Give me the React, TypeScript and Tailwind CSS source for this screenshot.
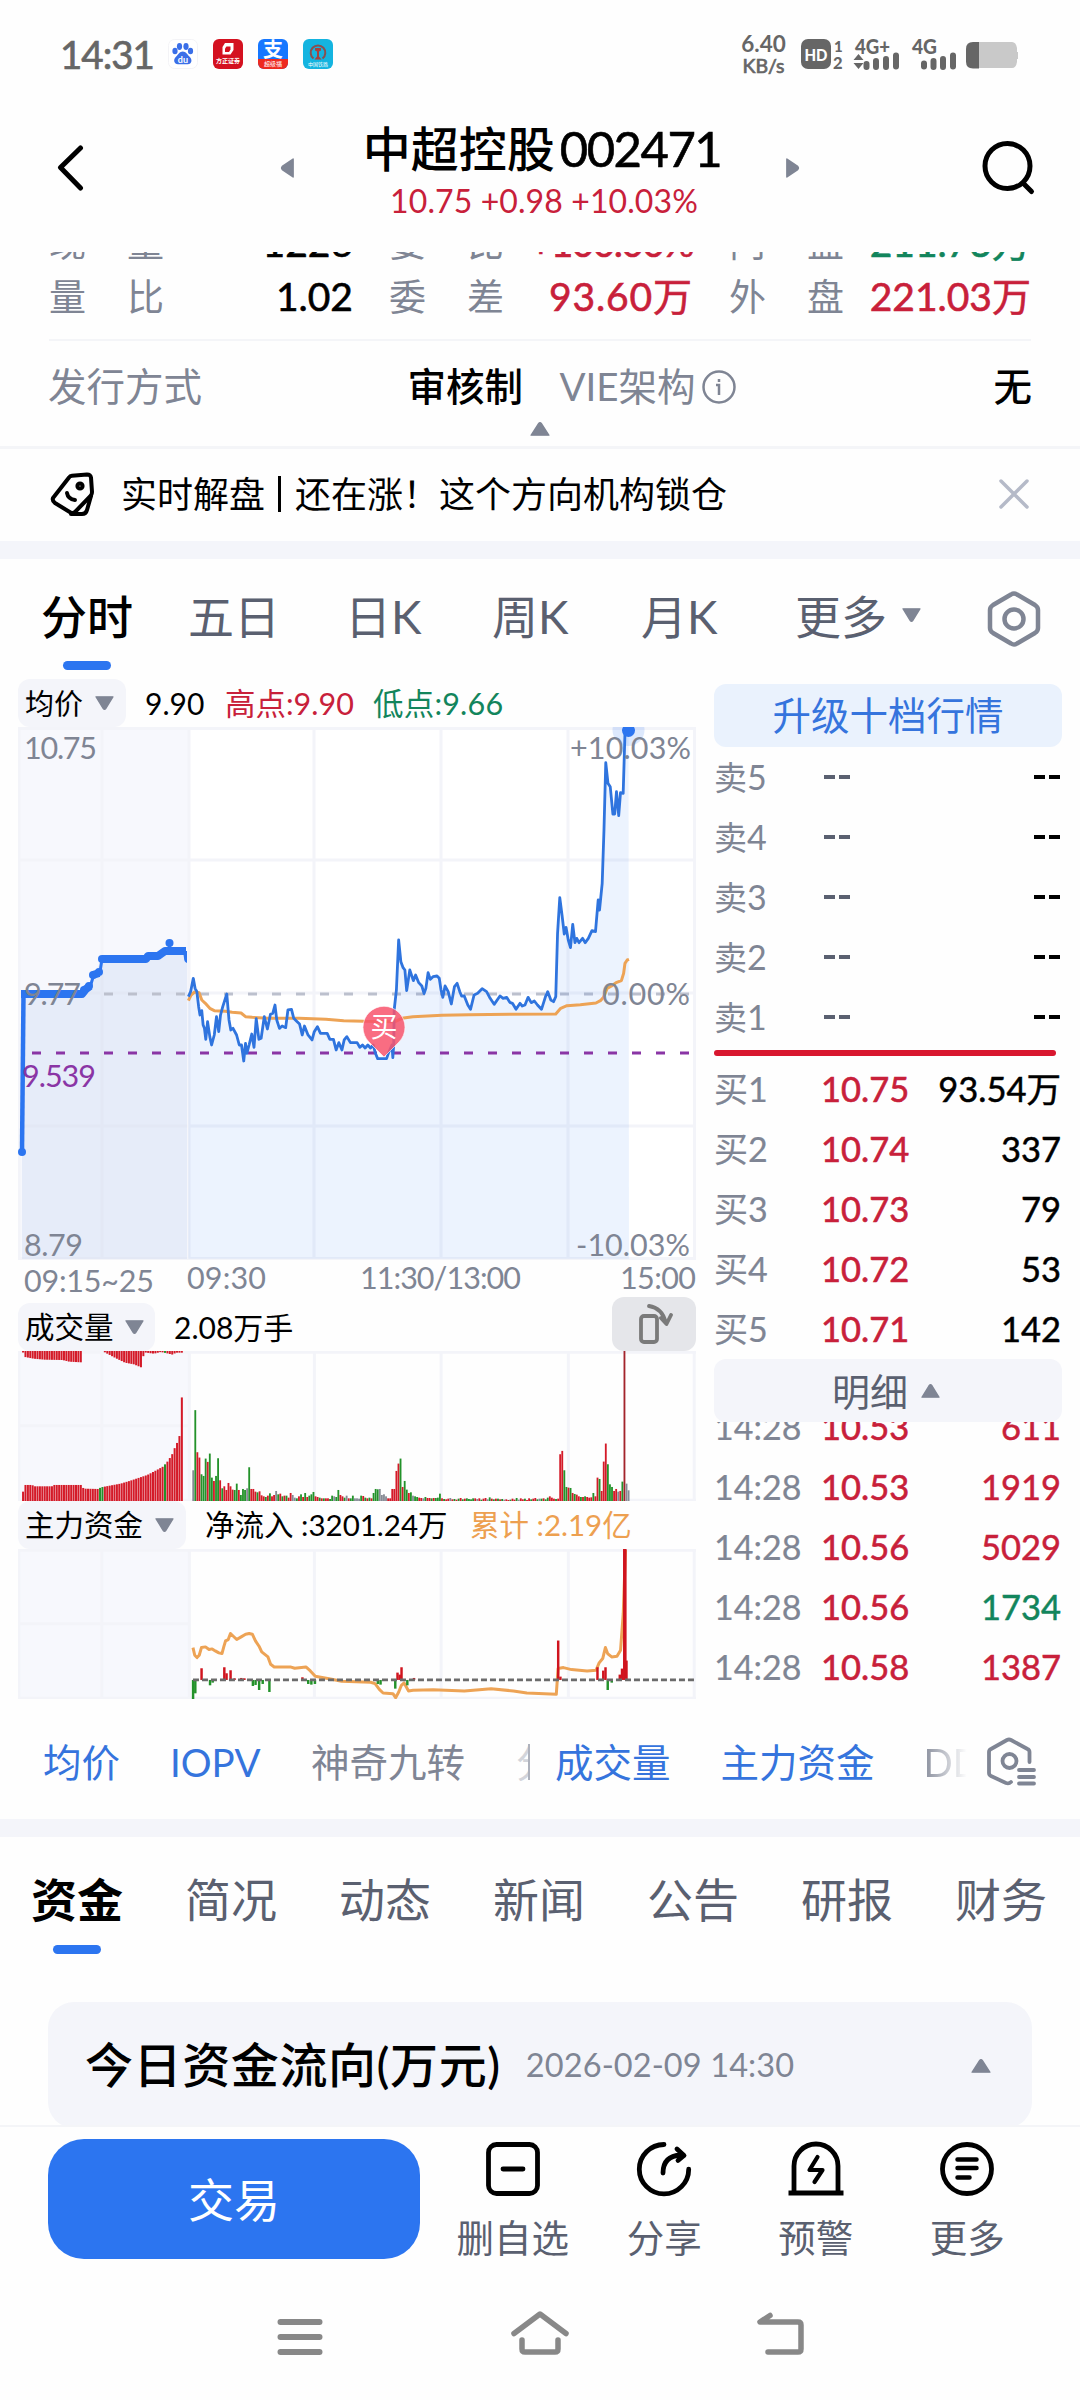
import type { ReactNode } from 'react';
import clsx from 'clsx';

/* ---------- data ---------- */

const asks = ['卖5', '卖4', '卖3', '卖2', '卖1'];

const bids = [
  { label: '买1', price: '10.75', volume: '93.54万' },
  { label: '买2', price: '10.74', volume: '337' },
  { label: '买3', price: '10.73', volume: '79' },
  { label: '买4', price: '10.72', volume: '53' },
  { label: '买5', price: '10.71', volume: '142' },
];

const ticks = [
  { price: '10.53', volume: '611', up: true },
  { price: '10.53', volume: '1919', up: true },
  { price: '10.56', volume: '5029', up: true },
  { price: '10.56', volume: '1734', up: false },
  { price: '10.58', volume: '1387', up: true },
];

const infoTabs = ['资金', '简况', '动态', '新闻', '公告', '研报', '财务'];

// Chart points are stored in chart units and scaled down by the <g> that holds them
const pricePoints =
  '422,230 427,215 433,175 437,205 441,215 445,260 448,285 452,272 455,315 458,325 461,358 465,305 470,350 474,375 480,345 485,290 490,335 494,285 499,260 508,222 513,300 517,330 522,325 530,345 536,375 541,375 546,423 550,370 553,400 558,375 564,342 569,382 574,296 580,358 585,355 592,290 599,327 606,282 611,280 616,255 620,300 626,325 632,318 640,323 645,270 653,268 658,295 664,303 671,312 677,345 682,318 690,345 699,360 704,335 711,320 718,340 727,340 733,340 739,358 747,358 753,390 759,368 766,390 771,360 777,350 785,368 800,368 806,382 812,375 818,384 824,375 830,384 836,375 841,400 846,416 866,416 870,400 878,375 880,413 882,375 883,270 888,210 893,60 898,125 903,143 907,150 911,212 918,150 926,182 931,165 938,188 945,198 950,221 954,205 959,158 964,178 970,170 979,168 984,175 988,210 992,232 997,198 1004,215 1011,252 1018,200 1024,190 1030,215 1034,228 1040,228 1048,255 1054,268 1062,225 1070,220 1080,206 1090,215 1098,235 1107,253 1120,228 1127,235 1135,232 1142,247 1148,250 1156,268 1165,250 1170,258 1176,255 1183,232 1190,248 1197,243 1204,255 1213,268 1222,230 1227,215 1234,240 1240,245 1245,230 1249,40 1254,-67 1259,-15 1264,42 1268,22 1273,60 1278,83 1283,13 1288,68 1292,55 1297,68 1305,55 1311,68 1318,55 1326,32 1334,35 1340,-60 1343,-30 1349,-110 1353,-270 1357,-472 1362,-410 1367,-400 1373,-318 1377,-318 1381,-385 1386,-313 1390,-382 1396,-380 1400,-560 1408,-570';

const averagePoints =
  '422,242 428,225 436,216 446,218 452,240 460,250 470,265 480,272 505,274 520,277 540,279 550,290 565,292 600,295 670,295 730,298 770,302 815,304 885,305 900,295 925,290 990,286 1050,284 1245,282 1256,265 1270,257 1300,254 1335,249 1345,242 1352,232 1360,205 1370,198 1380,188 1392,182 1397,160 1400,130 1405,120 1409,118';

const fundPoints =
  '432,1102 436,1125 441,1132 446,1125 451,1102 460,1100 468,1108 475,1106 482,1112 490,1118 497,1120 501,1100 505,1082 511,1078 516,1060 530,1078 540,1070 550,1062 558,1060 565,1062 572,1082 580,1098 586,1115 600,1130 606,1152 614,1160 650,1160 660,1164 685,1160 695,1172 706,1188 740,1196 765,1203 830,1206 840,1210 850,1228 858,1238 880,1240 886,1252 893,1235 899,1215 905,1208 915,1232 925,1230 970,1228 1040,1232 1100,1225 1150,1232 1180,1238 1246,1242 1250,1165 1262,1162 1280,1168 1315,1172 1335,1170 1342,1148 1350,1135 1356,1102 1361,1120 1370,1130 1382,1128 1390,1110 1396,1000 1401,810';

// [x, net inflow]
const fundBars: number[][] = [
  [432, -57], [437, -40], [451, 35], [470, -16], [476, -8], [502, 38], [507, 20], [516, 29], [525, 5], [540, 6], [547, 5],
  [566, -18], [572, -15], [580, -30], [588, -12], [603, -36], [677, 8], [690, -12], [697, -14], [705, -12], [846, -12],
  [852, -14], [885, -26], [890, 22], [895, 16], [899, 38], [912, -16], [927, 6], [1250, 118], [1255, 10], [1338, 38],
  [1351, 28], [1356, 38], [1361, -30], [1370, -8], [1388, 16], [1393, 34], [1398, 392], [1403, 58],
];

// Height plus colour letter per minute: r = up, g = down, x = flat
const minuteBars =
  '92x 272g 146r 130r 80g 75g 127g 117r 142g 70g 60r 75g 128g 62r 38g 44r 33r 54r 44r 34r 33g 52g 33r 18g 36g 33g 38x 101g 36r 36r 28r 26g 29r 17r 14r 12g 16r 23g 14r 18r 30x 20g 22r 14g 16r 16g 10r 24r 18x 10x 8g 14r 20g 12r 24g 12r 16g 20g 27g 14r 12r 10g 8r 8g 8r 8r 6g 16g 14x 12g 33g 18r 14r 10g 16x 8r 8g 16g 8x 8x 7x 16g 15r 10g 8r 10g 8r 24g 36g 35g 36x 18x 20x 14x 8r 8r 36r 36r 90r 112r 127g 42r 60g 34g 24r 26g 16x 14g 12g 10r 9r 8x 12g 9r 9r 8g 9r 9g 10g 22g 8r 6g 5r 7r 9x 5r 6g 4r 7g 9r 5g 7r 8g 6g 5g 8g 8r 6x 8r 4g 7r 9r 5x 11g 7r 5g 7r 7g 5r 6g 4x 5r 3r 4g 7r 4r 9g 4x 8r 5r 7g 3r 8r 5g 7r 9r 5g 7x 7g 8r 5g 10g 14r 10r 7r 6g 7r 140r 150r 92g 42g 40r 39g 24r 21g 19r 14r 12g 12r 14g 12r 10r 11r 24g 14r 70r 66g 30r 118r 172r 110g 50g 42g 30r 36r 28x 30r 58g 449d 52x 32x'.split(' ');

const barColors: Record<string, string> = { r: '#d41a28', g: '#23922a', x: '#858a94', d: '#a3242c' };

const between = (anchors: number[][], x: number) => {
  for (let i = 1; i < anchors.length; i++) {
    const [x0, y0] = anchors[i - 1];
    const [x1, y1] = anchors[i];
    if (x <= x1) return y0 + ((y1 - y0) * (x - x0)) / (x1 - x0);
  }
  return anchors[anchors.length - 1][1];
};

const auctionMatched = [
  [51, 28], [52, 28], [56, 48], [72, 48], [76, 44], [116, 44], [120, 48], [183, 48], [187, 37], [220, 36], [226, 41], [250, 47],
  [270, 52], [290, 60], [310, 69], [330, 78], [350, 92], [365, 103], [375, 118], [385, 138], [391, 158], [396, 172], [402, 195], [407, 310],
];
const auctionUnmatched = [
  [51, 3], [56, 18], [75, 23], [100, 26], [140, 27], [155, 32], [183, 34], [184, 0], [230, 0], [236, 5], [260, 22], [280, 35], [300, 40],
  [318, 50], [322, 4], [345, 8], [360, 3], [378, 8], [385, 11], [395, 5], [407, 5],
];
const auctionXs = Array.from({ length: 67 }, (_, i) => 51.5 + i * 5.39);

/* ---------- small pieces ---------- */

function Triangle({ dir = 'down', className }: { dir?: 'up' | 'down' | 'left' | 'right'; className: string }) {
  const d = {
    up: 'M2 19 L9 3 Q10 1 11 3 L18 19 Z',
    down: 'M2 1 L18 1 L11 17 Q10 19 9 17 Z',
    left: 'M19 1 L19 19 L3 11.5 Q1 10 3 8.5 Z',
    right: 'M1 1 L1 19 L17 11.5 Q19 10 17 8.5 Z',
  }[dir];
  return (
    <svg viewBox="0 0 20 20" preserveAspectRatio="none" className={clsx('shrink-0', className)}>
      <path d={d} fill="#7f8594" stroke="#7f8594" strokeWidth="1.5" strokeLinejoin="round" />
    </svg>
  );
}

function Chip({ children, className }: { children: ReactNode; className: string }) {
  return (
    <div className={clsx('flex shrink-0 items-center justify-between rounded-xl bg-[#f4f5fa] pl-[7px]', className)}>
      <span>{children}</span>
      <Triangle className="h-[15px] w-[21px]" />
    </div>
  );
}

function StatusBar() {
  return (
    <div className="flex h-[108px] items-center pl-[60px] text-[#666]">
      <span className="w-[109px] text-[38.5px] tracking-[-1px] [-webkit-text-stroke:0.7px]">14:31</span>
      <svg width="30" height="30" viewBox="0 0 30 30" className="ml-[-1px]">
        <rect x="0.5" y="0.5" width="29" height="29" rx="6" fill="#fff" stroke="#f3f3f6" />
        <g fill="#3a6fe8">
          <ellipse cx="7" cy="12" rx="2.6" ry="3.3" />
          <ellipse cx="11.5" cy="7.5" rx="2.6" ry="3.4" />
          <ellipse cx="18" cy="7.5" rx="2.6" ry="3.4" />
          <ellipse cx="22.5" cy="12" rx="2.6" ry="3.3" />
          <path d="M14.8 12.5c-3.2 0-4.4 3-6.6 4.9-3.5 3-2.2 7.8 1.8 7.8h9.8c4 0 5-4.8 1.6-7.8-2.2-1.9-3.4-4.9-6.6-4.9z" />
        </g>
        <text x="14.9" y="23.5" textAnchor="middle" fontSize="9" fontWeight="700" fill="#fff">du</text>
      </svg>
      <svg width="30" height="30" viewBox="0 0 30 30" className="ml-[15px]">
        <rect width="30" height="30" rx="6" fill="#d41120" />
        <path d="M12 4h8.5v7l-3 4.5h-8v-7.5z" fill="#fff" />
        <path d="M13.5 7.5h4v3l-1.5 2.5h-4v-3.5z" fill="#d41120" />
        <text x="15" y="24" textAnchor="middle" fontSize="6" fontWeight="700" fill="#fff">方正证券</text>
      </svg>
      <div className="ml-[15px] flex h-[30px] w-[30px] flex-col items-center overflow-hidden rounded-md bg-[#1677ff] text-white">
        <span className="text-[20px] font-bold">支</span>
        <span className="flex h-[10px] w-full items-center justify-center bg-[#ee2a20] text-[6px]">超级福</span>
      </div>
      <svg width="30" height="30" viewBox="0 0 30 30" className="ml-[15px]">
        <rect width="30" height="30" rx="6" fill="#14b4e0" />
        <path d="M10.5 19.5a7.3 7.3 0 1 1 9 0" fill="none" stroke="#8a5050" strokeWidth="2" />
        <path d="M12 9h6v2.5l-2 1v5l2.5 3h-7l2.5-3v-5l-2-1z" fill="#a8423e" />
        <text x="15" y="27" textAnchor="middle" fontSize="5" fill="#fff">中国铁路</text>
      </svg>

      <div className="ml-[406px] flex w-[49px] flex-col items-center gap-px">
        <span className="text-[22.5px] font-bold">6.40</span>
        <span className="text-[19.5px] [-webkit-text-stroke:0.7px]">KB/s</span>
      </div>
      <svg width="220" height="48" viewBox="798 30 220 48" className="ml-[10px]" fill="#666">
        <rect x="801" y="39" width="30" height="30" rx="7" />
        <text x="816" y="60.5" textAnchor="middle" fontSize="17" fontWeight="900" fill="#fff" textLength="23" lengthAdjust="spacingAndGlyphs">HD</text>
        <text x="834" y="51.5" fontSize="15" fontWeight="900">1</text>
        <text x="833" y="68.5" fontSize="16.5" fontWeight="900">2</text>
        <text x="855" y="54" fontSize="20.5" fontWeight="900" textLength="35" lengthAdjust="spacingAndGlyphs">4G+</text>
        <path d="M858.5 54l5 6h-10zM858.5 69l5-6h-10z" />
        <path d="M866.5 64v3M876 61v6M886 59v8M896 55.5v11" stroke="#666" strokeWidth="6" strokeLinecap="round" />
        <text x="912" y="54" fontSize="20.5" fontWeight="900" textLength="25" lengthAdjust="spacingAndGlyphs">4G</text>
        <path d="M924 63.5v3M933.5 61v6M943 59v8M953 55.5v11" stroke="#666" strokeWidth="6" strokeLinecap="round" />
        <path d="M975 42h37q4 0 5 6v4h1.5q1.5 0 1.5 2v3q0 2-1.5 2H1017v3q-1 6-5 6h-37z" fill="#c9c9c9" />
        <path d="M979 42v26.5h-6q-7 0-7-7V49q0-7 7-7z" />
      </svg>
    </div>
  );
}

function Header() {
  return (
    <div className="flex h-[144px] pt-[37px]">
      <svg width="36" height="54" viewBox="0 0 36 54" className="ml-[52px] shrink-0" fill="none" stroke="#000" strokeWidth="5" strokeLinecap="round" strokeLinejoin="round">
        <path d="M28.5 3L8.5 22.5l20 20.5" />
      </svg>
      <Triangle dir="left" className="ml-[192px] mt-[13px] h-[20px] w-[14px]" />
      <div className="ml-[48px] flex w-[404px] flex-col items-center text-black">
        <div className="mt-[-21px] flex items-center whitespace-nowrap pr-[4px]">
          <span className="text-[48px] font-medium">中超控股</span>
          <span className="ml-[5px] text-[49px] tracking-[-1.5px] [-webkit-text-stroke:0.6px]">002471</span>
        </div>
        <div className="mt-[12px] text-[32px] tracking-[0.1px] text-[#c8203a]">10.75 +0.98 +10.03%</div>
      </div>
      <Triangle dir="right" className="ml-[40px] mt-[13px] h-[20px] w-[14px]" />
      <svg width="60" height="60" viewBox="0 0 60 60" className="ml-[178px] mt-[-8px] shrink-0" fill="none" stroke="#000" strokeWidth="5" strokeLinecap="round">
        <circle cx="29.5" cy="29" r="22.5" />
        <path d="M45 46l8.5 8.5" />
      </svg>
    </div>
  );
}

function QuoteRow({ cells }: { cells: { label: string; value: string; color: string; spacing?: string }[] }) {
  return (
    <div className="grid h-[54px] grid-cols-[304px_340px_338px] items-center">
      {cells.map((c, i) => (
        <div key={i} className={clsx('flex items-center justify-between', i > 0 && 'pl-[36px]')}>
          <span className="flex gap-[41px] text-[37px] text-[#7f8594]">
            <span>{c.label[0]}</span>
            <span>{c.label[1]}</span>
          </span>
          <span className={clsx('whitespace-nowrap text-[39px] [-webkit-text-stroke:0.6px]', c.color, c.spacing)}>{c.value}</span>
        </div>
      ))}
    </div>
  );
}

function Quotes() {
  return (
    <>
      <div className="mx-[49px] h-[89px] overflow-hidden border-b-2 border-[#f4f5f8]">
        <div className="mt-[-37px]">
          <QuoteRow
            cells={[
              { label: '现量', value: '1226', color: 'text-black' },
              { label: '委比', value: '+100.00%', color: 'text-[#c8203a]', spacing: 'tracking-[-1.6px]' },
              { label: '内盘', value: '211.73万', color: 'text-[#12855c]' },
            ]}
          />
          <QuoteRow
            cells={[
              { label: '量比', value: '1.02', color: 'text-black' },
              { label: '委差', value: '93.60万', color: 'text-[#c8203a]', spacing: 'tracking-[0.9px]' },
              { label: '外盘', value: '221.03万', color: 'text-[#c8203a]' },
            ]}
          />
        </div>
      </div>
      <div className="flex h-[80px] items-center px-[48px] pt-[11px] text-[38.5px] text-[#7f8594]">
        <span>发行方式</span>
        <span className="ml-auto w-[116px] whitespace-nowrap font-medium text-black">审核制</span>
        <span className="ml-[36px] whitespace-nowrap">VIE架构</span>
        <svg width="34" height="34" viewBox="0 0 34 34" className="ml-[7px] mr-[257px]" fill="none" stroke="#7f8594" strokeWidth="2.5">
          <circle cx="17" cy="17" r="15.5" />
          <path d="M17 9v3M14 15h3v10" />
        </svg>
        <span className="font-medium text-black">无</span>
      </div>
      <div className="flex h-[28px] justify-center border-b-[3px] border-[#f4f5f8]">
        <Triangle dir="up" className="h-[15px] w-[22px]" />
      </div>
    </>
  );
}

function Notice() {
  return (
    <div className="flex h-[92px] items-center pb-[2px] pl-[50px] text-[36px] text-black">
      <svg width="44" height="44" viewBox="0 0 44 44" fill="none" stroke="#000" strokeWidth="4" strokeLinejoin="round" strokeLinecap="round">
        <path d="M19 5.5q1-1.5 3-1.7l15-1.3q3.5 0 4 3L42 20q0 2-1 3.5L25 40q-2 2-4.5.5L5 31q-3-2-2-5z" />
        <path d="M41 24l-4 14q-1 4-5 4H21" />
        <circle cx="30" cy="14" r="2.6" />
        <path d="M17 21q1 6 8 7" />
      </svg>
      <span className="ml-[27px]">实时解盘</span>
      <span className="ml-[13px] h-[36px] w-[3px] bg-black" />
      <span className="ml-[14px]">还在涨！这个方向机构锁仓</span>
      <svg width="32" height="32" viewBox="0 0 32 32" className="ml-auto mr-[50px]" stroke="#b5bac8" strokeWidth="3.5" strokeLinecap="round">
        <path d="M3 3l26 26M29 3L3 29" />
      </svg>
    </div>
  );
}

function PeriodTabs() {
  return (
    <div className="flex h-[120px] items-start pl-[41px] pt-[35px] text-[46px] text-[#5a6070]">
      <div className="flex w-[92px] flex-col items-center font-medium text-black">
        分时
        <span className="mt-[21px] h-[9px] w-[48px] rounded-full bg-[#2c75f0]" />
      </div>
      <span className="ml-[55px] w-[92px]">五日</span>
      <span className="ml-[65px] w-[80px] whitespace-nowrap">日K</span>
      <span className="ml-[67px] w-[80px] whitespace-nowrap">周K</span>
      <span className="ml-[69px] w-[80px] whitespace-nowrap">月K</span>
      <span className="ml-[74px] w-[92px]">更多</span>
      <Triangle className="ml-[14px] mt-[14px] h-[15px] w-[21px]" />
      <svg width="54" height="58" viewBox="0 0 54 58" className="ml-[65px] mt-[-4px]" fill="none" stroke="#7f8594" strokeWidth="4.5" strokeLinejoin="round">
        <path d="M24 4.5q3-2 6 0l18 10.5q3 2 3 5v18q0 3-3 5l-18 10.5q-3 2-6 0l-18-10.500q-3-2-3-5v-18q0-3 3-5z" />
        <circle cx="27" cy="29" r="9.5" />
      </svg>
    </div>
  );
}

/* ---------- charts ---------- */

function PriceChart() {
  return (
    <svg width="678" height="576" viewBox="18 727 678 576" className="block">
      <rect x="18" y="727" width="678" height="533" fill="#fff" />
      <rect x="18" y="727" width="172" height="533" fill="#f7f8fd" />
      <g stroke="#f3f4f9" strokeWidth="3">
        <path d="M18 728.5H696M18 860H696M18 993H696M18 1126H696M18 1258.5H696" />
        <path d="M19 727V1260M102 727V1260M189 727V1260M314 727V1260M441 727V1260M568 727V1260M694.5 727V1260" />
      </g>
      <path d="M22 1152V994H84L102 959H146L165 951H187V1259H22z" fill="#2c60c8" fillOpacity="0.08" />
      <path d="M104 994H690" stroke="#bcc0cd" strokeWidth="3" strokeDasharray="9 15" />
      <g transform="translate(0 920) scale(.4464 .3333)">
        <polygon points={`422,1016 ${pricePoints} 1409,1016`} fill="#2c75f0" fillOpacity="0.09" />
      </g>
      <path d="M32 1053H692" stroke="#8a35a5" strokeWidth="3" strokeDasharray="9 15" />
      <g transform="translate(0 920) scale(.4464 .3333)" fill="none" strokeLinejoin="round">
        <polyline points={averagePoints} stroke="#eda355" strokeWidth="3" vectorEffect="non-scaling-stroke" />
        <polyline points={pricePoints} stroke="#2f74de" strokeWidth="2.8" vectorEffect="non-scaling-stroke" />
      </g>
      {/* call auction */}
      <g fill="none" stroke="#2c75f0" strokeLinejoin="round">
        <path d="M22 1152L23.5 994" strokeWidth="4.5" />
        <path d="M84 994L91 984L94 974L100 972L102 959" strokeWidth="3" />
        <path d="M21 994H82L86 989L90 986M93 975L99 973M102 959H146L148 956H158L165 951H186" strokeWidth="8" />
      </g>
      <g fill="#2c75f0">
        <circle cx="22" cy="1152" r="4" />
        <circle cx="84" cy="990" r="4" />
        <circle cx="89" cy="986" r="4" />
        <circle cx="93" cy="975" r="4" />
        <circle cx="99" cy="972" r="4" />
        <circle cx="102" cy="959" r="4" />
        <circle cx="169.5" cy="943" r="4" />
        <path d="M168 943h3v8h-3zM183 951h4v12q-3-1-3-5z" />
      </g>
      <circle cx="628.5" cy="730" r="16" fill="#2c75f0" fillOpacity="0.16" />
      <circle cx="628.5" cy="730.5" r="6.5" fill="#2c75f0" />
      {/* buy marker */}
      <path d="M384 1057l-15-15a21 21 0 1 1 30 0z" fill="#f8546c" fillOpacity="0.85" stroke="#fff" strokeOpacity="0.6" />
      <text x="384" y="1037" textAnchor="middle" fontSize="27" fill="#fff">买</text>

      <g fontSize="30.5" fill="#7f8594">
        <text x="24" y="759" textLength="73">10.75</text>
        <text x="570" y="759" textLength="121">+10.03%</text>
        <text x="24" y="1005" textLength="57">9.77</text>
        <text x="602" y="1005" textLength="88">0.00%</text>
        <text x="22" y="1087" textLength="74" fill="#8a35a5">9.539</text>
        <text x="24" y="1256" textLength="59">8.79</text>
        <text x="576" y="1256" textLength="114">-10.03%</text>
        <text x="24" y="1292" textLength="130">09:15~25</text>
        <text x="187" y="1289" textLength="79">09:30</text>
        <text x="360" y="1289" textLength="161">11:30/13:00</text>
        <text x="620" y="1289" textLength="76">15:00</text>
      </g>
    </svg>
  );
}

function PanelGrid({ top, bottom }: { top: number; bottom: number }) {
  return (
    <>
      <rect x="40" y={top} width="385" height={bottom - top} fill="#f7f8fd" />
      <g stroke="#f3f4f9" strokeWidth="3">
        {[42, 228, 424, 704, 988, 1273, 1555].map((x) => (
          <path key={x} d={`M${x} ${top}V${bottom}`} vectorEffect="non-scaling-stroke" />
        ))}
        <path d={`M40 ${top + 4}H1559M40 ${top + 224}H424M40 ${bottom - 2}H1559`} vectorEffect="non-scaling-stroke" />
      </g>
    </>
  );
}

function VolumeChart() {
  return (
    <svg width="678" height="150" viewBox="40 213 1519 449" preserveAspectRatio="none" className="block">
      <PanelGrid top={213} bottom={662} />
      {auctionXs.map((x, i) => {
        const h = between(auctionMatched, x);
        const u = between(auctionUnmatched, x);
        return (
          <g key={i} fill={(x > 220 && x < 231) || Math.abs(x - 369) < 2.7 ? '#23922a' : '#d41a28'}>
            <rect x={x - 2.4} y={662 - h} width="4.5" height={h} />
            <rect x={x - 2.4} y="213" width="4.5" height={u} />
          </g>
        );
      })}
      {minuteBars.map((bar, i) => {
        const h = parseInt(bar, 10);
        return <rect key={i} x={430.5 + i * 4.645} y={662 - h} width="4.1" height={h} fill={barColors[bar.slice(-1)]} />;
      })}
    </svg>
  );
}

function FundChart() {
  return (
    <svg width="678" height="150" viewBox="40 807 1519 449" preserveAspectRatio="none" className="block">
      <PanelGrid top={807} bottom={1256} />
      <polyline points={fundPoints} fill="none" stroke="#eda355" strokeWidth="3" strokeLinejoin="round" vectorEffect="non-scaling-stroke" />
      {fundBars.map(([x, v]) => (
        <rect key={x} x={x - 2.5} y={v > 0 ? 1199 - v : 1199} width={Math.abs(v) > 300 ? 8 : 5.5} height={Math.abs(v)} fill={v > 0 ? '#d0141e' : '#23922a'} />
      ))}
      <path d="M432 1199H1555" stroke="#6b6b6b" strokeWidth="2.8" strokeDasharray="6 3" vectorEffect="non-scaling-stroke" />
    </svg>
  );
}

function Charts() {
  return (
    <div className="w-[678px] text-[30px] text-black">
      <div className="flex h-[52px] items-center pt-[4px]">
        <Chip className="h-[48px] w-[108px] pr-[11px] text-[29px]">均价</Chip>
        <span className="ml-[19px] w-[60px]">9.90</span>
        <span className="ml-[20px] w-[129px] whitespace-nowrap text-[30.5px] text-[#c8203a]">高点:9.90</span>
        <span className="ml-[19px] whitespace-nowrap text-[30.5px] tracking-[0.2px] text-[#12855c]">低点:9.66</span>
      </div>
      <PriceChart />
      <div className="flex h-[48px] items-center">
        <Chip className="h-[48px] w-[137px] pr-[10px] text-[29.5px]">成交量</Chip>
        <span className="ml-[19px] w-[240px]">2.08万手</span>
        <div className="ml-auto mt-[-6px] flex h-[54px] w-[84px] items-center justify-center rounded-xl bg-[#e5e6ea]">
          <svg width="38" height="42" viewBox="0 0 38 42" fill="none" stroke="#7a7a7a" strokeWidth="3.8" strokeLinecap="round" strokeLinejoin="round">
            <rect x="6" y="13" width="16" height="26" rx="3" />
            <path d="M14 3q13 2 16.5 16M26 15l5.5 6 4.5-9" />
          </svg>
        </div>
      </div>
      <VolumeChart />
      <div className="flex h-[48px] items-center">
        <Chip className="h-[48px] w-[168px] pr-[11px] text-[29.5px]">主力资金</Chip>
        <span className="ml-[19px] w-[246px] whitespace-nowrap text-[29.5px]">净流入 :3201.24万</span>
        <span className="ml-[19px] whitespace-nowrap text-[29.5px] text-[#eda050]">累计 :2.19亿</span>
      </div>
      <FundChart />
    </div>
  );
}

/* ---------- order book ---------- */

function BookRow({ label, price, volume, priceColor, volumeColor }: { label: string; price: string; volume: string; priceColor: string; volumeColor: string }) {
  return (
    <div className="flex h-[60px] items-center whitespace-nowrap text-[34.5px]">
      <span className="w-[107px] text-[34px] text-[#7f8594] [-webkit-text-stroke:0.2px]">{label}</span>
      <span className={clsx('[-webkit-text-stroke:0.6px]', priceColor)}>{price}</span>
      <span className={clsx('ml-auto pr-[1px] [-webkit-text-stroke:0.5px]', volumeColor)}>{volume}</span>
    </div>
  );
}

function Dashes({ color }: { color: string }) {
  return (
    <span className="flex gap-[4px]">
      <i className={clsx('h-[4px] w-[11px]', color)} />
      <i className={clsx('h-[4px] w-[11px]', color)} />
    </span>
  );
}

function OrderBook() {
  return (
    <div className="ml-[18px] w-[348px] pt-[9px]">
      <div className="flex h-[63px] items-center justify-center rounded-xl bg-[#eaf2fd] text-[38.5px] text-[#3574dd]">升级十档行情</div>
      {asks.map((label) => (
        <div key={label} className="flex h-[60px] items-center pr-[2px] text-[33px] text-[#7f8594]">
          <span className="flex w-[110px] items-center">
            {label[0]}
            <span className="text-[34px]">{label[1]}</span>
          </span>
          <Dashes color="bg-[#5a6070]" />
          <span className="ml-auto">
            <Dashes color="bg-black" />
          </span>
        </div>
      ))}
      <div className="mb-[3px] mt-[3px] h-[6px] w-[342px] rounded-full bg-[#d8172f]" />
      {bids.map((b) => (
        <BookRow key={b.label} {...b} priceColor="text-[#c8203a]" volumeColor="text-black" />
      ))}
      <div className="flex h-[63px] items-center justify-center rounded-xl bg-[#f4f5fa] pr-[3px] text-[38px] text-[#5a6070]">
        明细
        <Triangle dir="up" className="ml-[12px] h-[15px] w-[21px]" />
      </div>
      <div className="overflow-hidden">
        <div className="mt-[-25px]">
          {ticks.map((t, i) => (
            <BookRow key={i} label="14:28" price={t.price} volume={t.volume} priceColor="text-[#c8203a]" volumeColor={t.up ? 'text-[#c8203a]' : 'text-[#12855c]'} />
          ))}
        </div>
      </div>
    </div>
  );
}

/* ---------- lower part ---------- */

function Indicators() {
  return (
    <div className="flex h-[116px] items-center whitespace-nowrap pl-[43px] pt-[2px] text-[38.5px] text-[#3574dd]">
      <span>均价</span>
      <span className="ml-[50px] w-[92px]">IOPV</span>
      <span className="ml-[49px] text-[#7f8594]">神奇九转</span>
      <span className="ml-[51px] w-[12px] overflow-hidden text-[#d3d5db]">
        <span className="block">分</span>
      </span>
      <span className="h-[36px] w-[2px] bg-[#aeb2bd]" />
      <span className="ml-[25px]">成交量</span>
      <span className="ml-[50px]">主力资金</span>
      <span className="ml-[49px] flex w-[43px] overflow-hidden bg-gradient-to-r from-[#8a8f9d] to-white bg-clip-text text-transparent">DDX</span>
      <svg width="50" height="50" viewBox="0 0 50 50" className="ml-[19px]" fill="none" stroke="#7f8594" strokeWidth="3.8" strokeLinecap="round" strokeLinejoin="round">
        <path d="M43.5 25V15q0-2-2-3L25 3q-2-1-4 0L5 12q-2 1-2 3v21q0 2 2 3l15 7q3 1 5-1" />
        <circle cx="23.5" cy="24" r="7" />
        <path d="M33 33h15M33 40h15M33 46.5h15" />
      </svg>
    </div>
  );
}

function InfoTabs() {
  return (
    <div className="flex h-[165px] gap-[62px] pl-[31px] pt-[40px] text-[46px] text-[#5a6070]">
      {infoTabs.map((tab, i) => (
        <div key={tab} className={clsx('flex w-[92px] flex-col items-center', i === 0 && 'font-bold text-black')}>
          {tab}
          {i === 0 && <span className="mt-[22px] h-[9px] w-[48px] rounded-full bg-[#2c75f0]" />}
        </div>
      ))}
    </div>
  );
}

function FundCard() {
  return (
    <div className="h-[125px] overflow-hidden border-b-2 border-[#f4f5f8]">
      <div className="mx-[48px] flex h-[126px] items-center whitespace-nowrap rounded-[26px] bg-[#f4f5fa] pl-[37px] pr-[40px]">
        <span className="text-[48px] font-medium tracking-[0.6px] text-black">今日资金流向(万元)</span>
        <span className="ml-[25px] text-[32.5px] tracking-[0.1px] text-[#7f8594]">2026-02-09 14:30</span>
        <Triangle dir="up" className="ml-auto h-[15px] w-[22px]" />
      </div>
    </div>
  );
}

function Action({ label, children }: { label: string; children: ReactNode }) {
  return (
    <div className="flex w-[151.5px] flex-col items-center">
      <svg width="60" height="60" viewBox="0 0 60 60" fill="none" stroke="#000" strokeWidth="4.8" strokeLinecap="round" strokeLinejoin="round">
        {children}
      </svg>
      <span className="mt-[20px] text-[37.5px] text-[#5a6070]">{label}</span>
    </div>
  );
}

function BottomBar() {
  return (
    <div className="flex h-[153px] items-start pl-[48px] pt-[12px]">
      <button className="h-[120px] w-[372px] rounded-[36px] bg-[#2c75f0] pt-[2px] text-[46px] text-white">交易</button>
      <div className="ml-[17px] flex">
        <Action label="删自选">
          <rect x="5.5" y="5.5" width="49" height="49" rx="8" />
          <path d="M20 30h20" />
        </Action>
        <Action label="分享">
          <path d="M30 5.5a24.7 24.7 0 1 0 24.7 24.7" />
          <path d="M29 34q0-17 18-18M43 10l7 6.5-6 5" />
        </Action>
        <Action label="预警">
          <path d="M2.5 54h55M8 54V27a22 22 0 0 1 44 0v27" strokeLinecap="butt" />
          <path d="M31.5 18l-8 13h13l-8 12" strokeWidth="4.2" />
        </Action>
        <Action label="更多">
          <circle cx="30" cy="30" r="24.5" />
          <path d="M20.5 20.5h19M20.5 29h19M20.5 38.5h12" strokeWidth="4.5" />
        </Action>
      </div>
    </div>
  );
}

function NavBar() {
  return (
    <div className="flex h-[120px] items-start pl-[277px] pt-[29px]">
      <svg width="46" height="50" viewBox="0 0 46 50" stroke="#888" strokeWidth="6" strokeLinecap="round">
        <path d="M3.5 13h39M3.5 28h39M3.5 43h39" />
      </svg>
      <svg width="60" height="50" viewBox="0 0 60 50" className="ml-[187px]" fill="none" stroke="#888" strokeWidth="5.5" strokeLinecap="round" strokeLinejoin="round">
        <path d="M4 24.5L30 5l26 19.5" />
        <path d="M12 31v9q0 3 3 3h30q3 0 3-3v-9" />
      </svg>
      <svg width="52" height="50" viewBox="0 0 52 50" className="ml-[186px]" fill="none" stroke="#888" strokeWidth="5.5" strokeLinecap="round" strokeLinejoin="round">
        <path d="M14 6.5L4 13h38q3 0 3 3v24q0 3-3 3H12" />
      </svg>
    </div>
  );
}

export default function App() {
  return (
    <div
      lang="zh-CN"
      className="h-[2400px] w-[1080px] overflow-hidden bg-[#fefefe] font-['Lato','Noto_Sans_CJK_SC',sans-serif] leading-none"
    >
      <StatusBar />
      <Header />
      <Quotes />
      <Notice />
      <div className="h-[18px] bg-[#f4f5fa]" />
      <PeriodTabs />
      <div className="mt-[-4px] flex h-[1028px] pl-[18px]">
        <Charts />
        <OrderBook />
      </div>
      <Indicators />
      <div className="h-[18px] bg-[#f4f5fa]" />
      <InfoTabs />
      <FundCard />
      <BottomBar />
      <NavBar />
    </div>
  );
}
